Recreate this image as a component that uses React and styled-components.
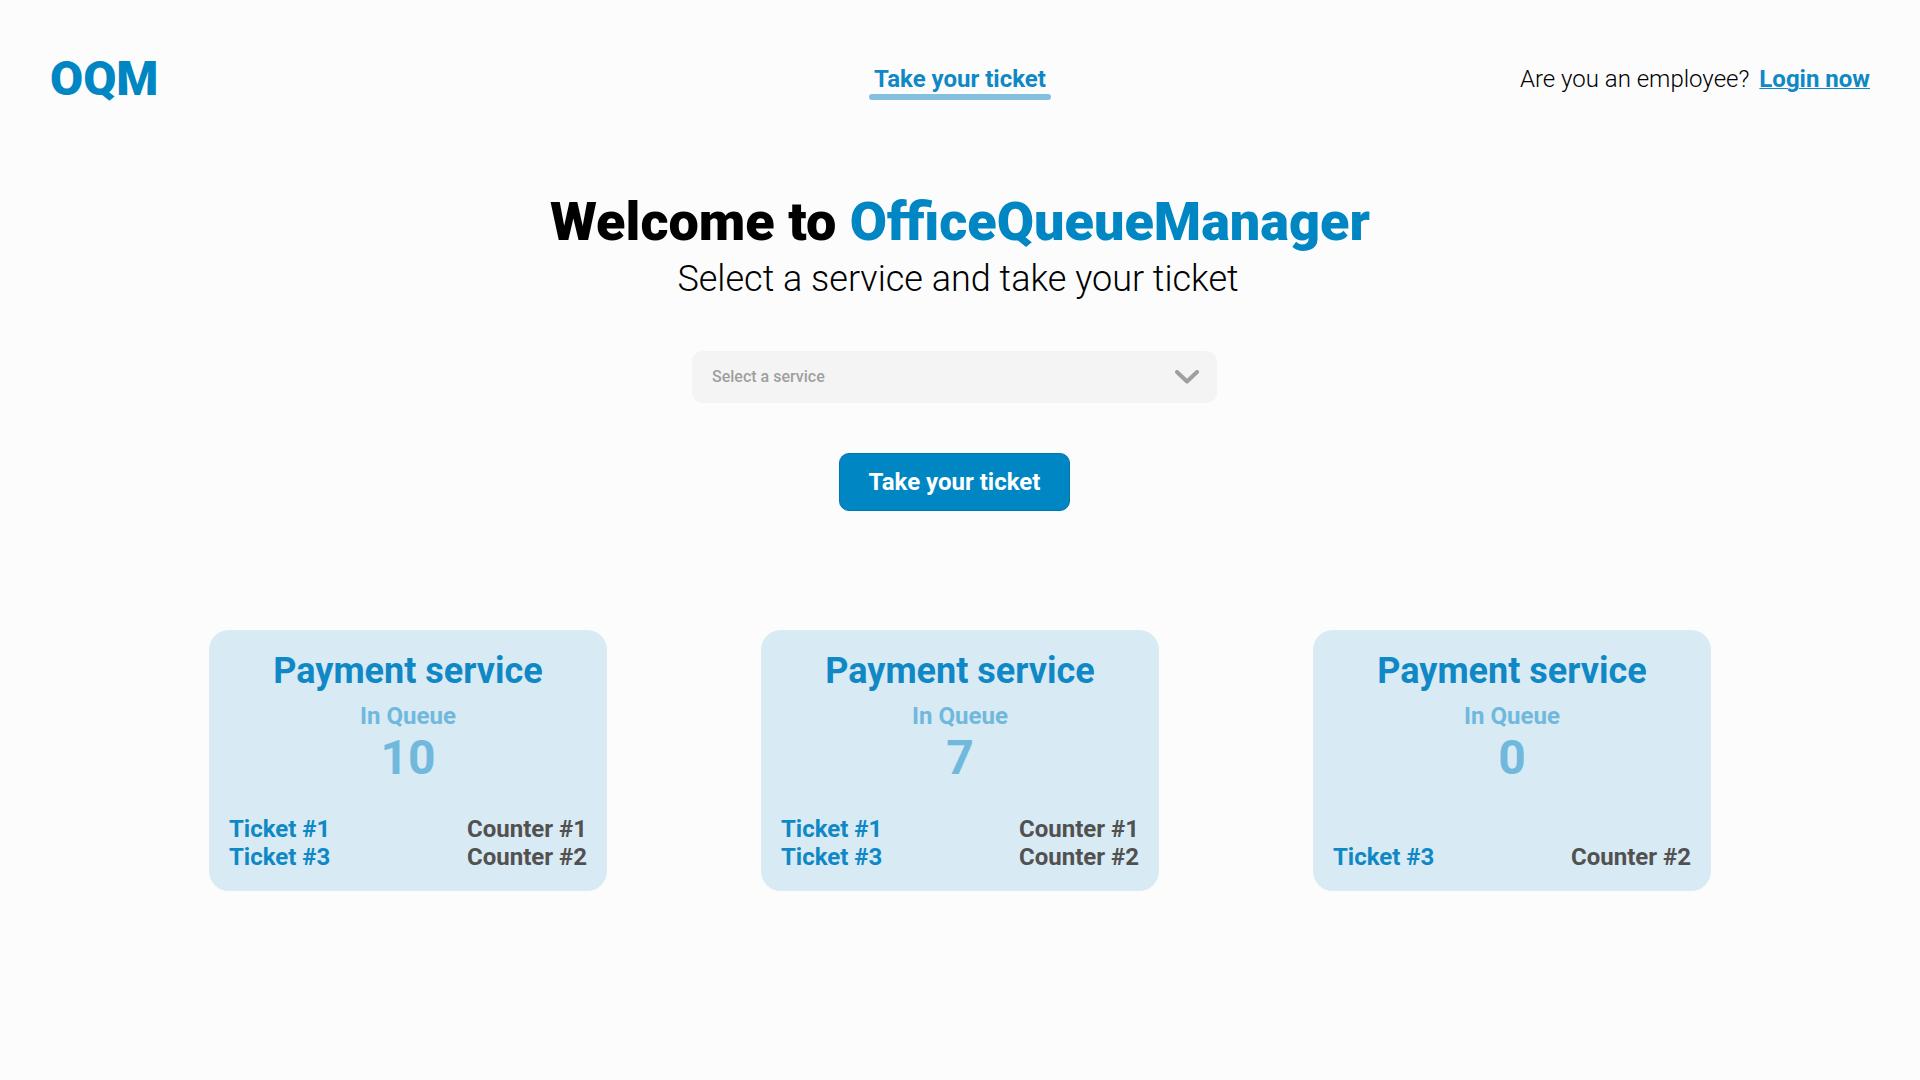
import React from "react";
import styled, { createGlobalStyle } from "styled-components";

const GlobalStyle = createGlobalStyle`
  *, *::before, *::after { box-sizing: border-box; }
  body {
    margin: 0;
    background: #fcfcfc;
    color: #000;
    font-family: Roboto, "Liberation Sans", sans-serif;
  }
  h1, h2, p, ul, dl, dt, dd { margin: 0; padding: 0; }
`;

const Header = styled.header`
  display: grid;
  grid-template-columns: 1fr auto 1fr;
  align-items: center;
  padding: 51px 50px 0;
`;

const Logo = styled.a`
  justify-self: start;
  color: #0087c3;
  font-size: 48px;
  font-weight: 900;
  line-height: 56px;
  text-decoration: none;
`;

const Nav = styled.nav`
  padding-top: 6px;
`;

const NavLink = styled.a`
  display: block;
  padding: 0 5px;
  color: #0f88c5;
  font-size: 24px;
  font-weight: 700;
  line-height: 30px;
  text-decoration: none;

  &::after {
    content: "";
    display: block;
    height: 6px;
    margin: 0 -5px;
    border-radius: 3px;
    background: #83bfde;
  }
`;

const Account = styled.p`
  justify-self: end;
  display: flex;
  gap: 10px;
  font-size: 24px;
  font-weight: 300;
  line-height: 28px;
`;

const LoginLink = styled.a`
  color: #0f88c5;
  font-weight: 700;
  text-decoration-thickness: 1px;
`;

const Main = styled.main`
  display: flex;
  flex-direction: column;
  align-items: center;
`;

const Title = styled.h1`
  margin-top: 82px;
  font-size: 54px;
  font-weight: 900;
  line-height: 66px;
`;

const Brand = styled.span`
  color: #0087c3;
`;

const Subtitle = styled.p`
  padding-right: 4px;
  font-size: 36px;
  font-weight: 300;
  line-height: 48px;
`;

const TicketForm = styled.form`
  display: flex;
  flex-direction: column;
  align-items: center;
  gap: 50px;
  width: 100%;
  margin-top: 48px;
  padding-right: 11px;
`;

const SelectBox = styled.div`
  display: grid;
  align-items: center;
  width: 100%;
  max-width: 525px;
  color: #9f9f9f;

  > * { grid-area: 1 / 1; }

  > svg {
    justify-self: end;
    margin-right: 18px;
    pointer-events: none;
  }
`;

const ServiceSelect = styled.select`
  appearance: none;
  width: 100%;
  padding: 16px 20px;
  border: 0;
  border-radius: 10px;
  background: #f4f4f4;
  color: inherit;
  font-family: inherit;
  font-size: 16px;
  font-weight: 500;
  line-height: 20px;
`;

const TicketButton = styled.button`
  padding: 14px 29px;
  border: 1px solid #0077ac;
  border-radius: 10px;
  background: #0087c3;
  color: #fff;
  font-family: inherit;
  font-size: 24px;
  font-weight: 700;
  line-height: 28px;
  cursor: pointer;
`;

const Queues = styled.section`
  display: flex;
  flex-wrap: wrap;
  justify-content: center;
  gap: 40px 154px;
  margin-top: 119px;
`;

const Card = styled.article`
  display: flex;
  flex-direction: column;
  width: 398px;
  min-height: 261px;
  padding: 20px;
  border-radius: 20px;
  background: #d8eaf4;
`;

const CardTitle = styled.h2`
  color: #0f88c5;
  font-size: 36px;
  font-weight: 700;
  line-height: 42px;
  text-align: center;
`;

const Queue = styled.dl`
  display: flex;
  flex-direction: column;
  align-items: center;
  margin-top: 10px;
  color: #70b8dc;
  font-weight: 700;
`;

const QueueLabel = styled.dt`
  font-size: 24px;
  line-height: 28px;
`;

const QueueCount = styled.dd`
  font-size: 48px;
  line-height: 56px;
`;

const Calls = styled.ul`
  margin-top: auto;
  list-style: none;
`;

const Call = styled.li`
  display: flex;
  justify-content: space-between;
  color: #0f88c5;
  font-size: 24px;
  font-weight: 700;
  line-height: 28px;
`;

const Counter = styled.span`
  color: #515151;
`;

const queues = [
  { id: 1, name: "Payment service", waiting: 10, calls: [[1, 1], [3, 2]] },
  { id: 2, name: "Payment service", waiting: 7, calls: [[1, 1], [3, 2]] },
  { id: 3, name: "Payment service", waiting: 0, calls: [[3, 2]] },
];

function Chevron() {
  return (
    <svg width="24" height="14" viewBox="0 0 24 14" fill="none" aria-hidden="true">
      <path d="M2 2L12 11.5L22 2" stroke="currentColor" strokeWidth="4" strokeLinecap="round" strokeLinejoin="round" />
    </svg>
  );
}

function QueueCard({ name, waiting, calls }) {
  return (
    <Card>
      <CardTitle>{name}</CardTitle>
      <Queue>
        <QueueLabel>In Queue</QueueLabel>
        <QueueCount>{waiting}</QueueCount>
      </Queue>
      <Calls>
        {calls.map(([ticket, counter]) => (
          <Call key={ticket}>
            <span>Ticket #{ticket}</span>
            <Counter>Counter #{counter}</Counter>
          </Call>
        ))}
      </Calls>
    </Card>
  );
}

export default function App() {
  return (
    <>
      <GlobalStyle />
      <Header>
        <Logo href="#home">OQM</Logo>
        <Nav>
          <NavLink href="#ticket">Take your ticket</NavLink>
        </Nav>
        <Account>
          Are you an employee? <LoginLink href="#login">Login now</LoginLink>
        </Account>
      </Header>
      <Main>
        <Title>
          Welcome to <Brand>OfficeQueueManager</Brand>
        </Title>
        <Subtitle>Select a service and take your ticket</Subtitle>
        <TicketForm onSubmit={(event) => event.preventDefault()}>
          <SelectBox>
            <ServiceSelect aria-label="Service" defaultValue="">
              <option value="" disabled>Select a service</option>
              <option value="payment">Payment service</option>
            </ServiceSelect>
            <Chevron />
          </SelectBox>
          <TicketButton type="submit">Take your ticket</TicketButton>
        </TicketForm>
        <Queues>
          {queues.map((queue) => (
            <QueueCard key={queue.id} {...queue} />
          ))}
        </Queues>
      </Main>
    </>
  );
}
